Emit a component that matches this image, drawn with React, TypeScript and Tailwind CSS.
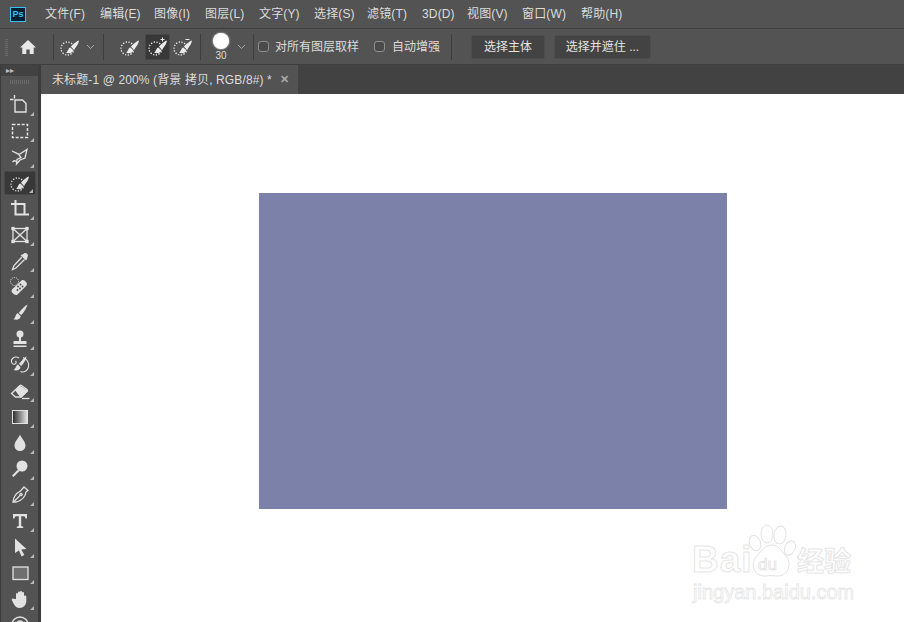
import type { ReactNode } from "react";

const cjk = "font-['Liberation_Sans','Noto_Sans_CJK_SC',sans-serif]";

const menus = [
  { label: "文件(F)", w: "w-[55px]" },
  { label: "编辑(E)", w: "w-[54px]" },
  { label: "图像(I)", w: "w-[51px]" },
  { label: "图层(L)", w: "w-[54px]" },
  { label: "文字(Y)", w: "w-[55px]" },
  { label: "选择(S)", w: "w-[53px]" },
  { label: "滤镜(T)", w: "w-[55px]" },
  { label: "3D(D)", w: "w-[45px]" },
  { label: "视图(V)", w: "w-[55px]" },
  { label: "窗口(W)", w: "w-[59px]" },
  { label: "帮助(H)", w: "w-[50px]" },
];

function Sep({ ml }: { ml: string }) {
  return <div className={`h-[26px] w-px bg-[#3d3d3d] shrink-0 ${ml}`} />;
}

function Chevron({ ml }: { ml: string }) {
  return (
    <svg width="9" height="6" viewBox="0 0 9 6" className={`shrink-0 ${ml}`} fill="none" stroke="#a8a8a8" strokeWidth="1">
      <path d="M1 1l3.500 3.500L8 1" />
    </svg>
  );
}

const s = "#e2e2e2";

function BrushShape({ color }: { color: string }) {
  return (
    <>
      <circle cx="7.500" cy="11.500" r="6.500" fill="none" stroke={color} strokeWidth="1.300" strokeDasharray="1.300 1.500" />
      <path d="M19 3.500c-2 .5-6.300 3.800-8 6.300l2.800 2.600C16.300 10.400 18.700 6 19 3.500z" fill={color} />
      <path d="M10.300 10.500c-2.200.4-1.900 3.700-4.300 5.300 3 1 6.900.4 7.300-2.600z" fill={color} />
    </>
  );
}

function QuickBrush({ mark }: { mark?: "+" | "-" }) {
  return (
    <svg width="20" height="20" viewBox="0 0 20 20" fill="none">
      <BrushShape color="#ececec" />
      {mark === "+" && <path d="M14.500 .5v4M12.500 2.500h4" stroke="#ececec" strokeWidth="1" />}
      {mark === "-" && <path d="M12.500 2.500h4" stroke="#ececec" strokeWidth="1" />}
    </svg>
  );
}

function Corner() {
  return <span className="absolute right-[2px] bottom-[1px] w-0 h-0 border-l-[4px] border-l-transparent border-b-[4px] border-b-[#b8b8b8]" />;
}

const tools: ReactNode[] = [
  <g fill="none" stroke={s} strokeWidth="1.400"><path d="M5 5h7.500l3.500 3.500V17H5z" /><path d="M0 4.500h3.500M4.500 0v3.500" /></g>,
  <rect x="2.500" y="3.500" width="15" height="13" fill="none" stroke={s} strokeWidth="1.500" strokeDasharray="3 1.600" />,
  <g fill="none" stroke={s} strokeWidth="1.300"><path d="M2 4l7 3.500L17 2.500l-2 8.500-5 2-3.500 4 .5-4.500 4-2-2.500-3.500z" /><path d="M2.500 15c2-2 3.500-1.500 4.500 1" /></g>,
  <BrushShape color={s} />,
  <g fill="none" stroke={s} strokeWidth="2"><path d="M1 5h13.500v11" /><path d="M5.500 1v14.500H19" /></g>,
  <g fill="none" stroke={s} strokeWidth="1.300"><rect x="3" y="3.500" width="14" height="13" /><path d="M3 3.500l14 13M17 3.500l-14 13" /><rect x="2" y="2.500" width="2" height="2" fill={s} /><rect x="16" y="2.500" width="2" height="2" fill={s} /><rect x="2" y="15.500" width="2" height="2" fill={s} /><rect x="16" y="15.500" width="2" height="2" fill={s} /></g>,
  <g><path d="M12 6l-8 8.500L2.500 18.500l3.500-1.500L14.500 8.500" fill="none" stroke={s} strokeWidth="1.300" /><path d="M10.500 4l5.500 5.500 1-1.500.5-2c1.500-2.500-1.500-5-3.500-3.500l-1.500 1z" fill={s} /></g>,
  <g><path d="M2 12.500L11.500 3.500c2-2 7 2.500 5 5L7.500 17.500c-2 2-7.500-2.500-5.500-5z" fill={s} /><g fill="#535353"><circle cx="8" cy="9.500" r="1" /><circle cx="10.500" cy="7.500" r="1" /><circle cx="10" cy="11.500" r="1" /><circle cx="12.500" cy="9.500" r="1" /><circle cx="7.500" cy="13" r="1" /></g><circle cx="4.500" cy="4.500" r="4" fill="none" stroke={s} strokeDasharray="1 1" /></g>,
  <g fill={s}><path d="M17.500 1.500c-1.500.6-6.500 5-8.700 8.500l2.300 2C14 9.500 17 4 17.500 1.500z" /><path d="M8 10.300c-2.800.5-1.800 4-4.500 6 3.500 1 6.800.2 7.200-3z" /></g>,
  <g fill={s}><circle cx="10" cy="5" r="3.500" /><rect x="9" y="7" width="2" height="5" /><path d="M3.500 12h13v3h-13z" /><rect x="3.500" y="16.500" width="13" height="1.500" /></g>,
  <g><g fill="none" stroke={s} strokeWidth="1.100"><path d="M9 3C4 0 0 5 2 8s5.500 0 3.500-2" /><path d="M13 2.500c4 1.500 6.500 5.500 5.500 9.500s-4.500 6-8 4.500" /></g><path d="M16.500 1.500c-1.500.6-5.500 4.500-7.500 7.500l2.200 2c2.800-2.500 5-7 5.300-9.500z" fill={s} /><path d="M8 9.500c-2.200.5-1.500 3.500-4.500 5.500 3 1 6.500.2 7-2.800z" fill={s} /></g>,
  <g fill="none" stroke={s} strokeWidth="1.300"><path d="M1.500 12.500l8.500-8c.5-.5 1-.5 1.500 0l5.500 4c.5.5.5 1 0 1.500L11 16H5.500z" /><path d="M9.500 5l7.800 5-6.300 6-5-6.500z" fill={s} /><path d="M12 17.500h7.500" /></g>,
  <>
    <defs>
      <linearGradient id="grad">
        <stop offset="0" stopColor="#2a2a2a" />
        <stop offset="1" stopColor="#e8e8e8" />
      </linearGradient>
    </defs>
    <rect x="2.500" y="3.500" width="15" height="13" fill="url(#grad)" stroke={s} />
  </>,
  <path d="M10 1.500c1 3 5.500 7 5.500 11a5.500 5.500 0 0 1-11 0C4.500 8.500 9 4.500 10 1.500z" fill={s} />,
  <g fill={s}><circle cx="12" cy="7" r="5.500" /><path d="M8 10.500L2 16.500l1.500 1.500L9.500 12z" /></g>,
  <g fill="none" stroke={s} strokeWidth="1.300"><path d="M14 2l4 3.500-2 1.500c-.5 4.500-3.500 8-9.500 10L3 17c.5-5.500 3.500-9 7.500-11z" /><path d="M3.500 17l6.500-6.500" /><circle cx="11" cy="9.500" r="1.100" /></g>,
  <path d="M3 3h14v4.500h-1.500c-.2-1.200-.5-2.200-1.700-2.200H11.200V15l2 .7V17H6.800v-1.300l2-.7V5.300H6.200C5 5.300 4.700 6.300 4.500 7.500H3z" fill={s} />,
  <path d="M5 1.500l11.500 10.500-5.200.5 3 5.500-2.800 1.500-2.500-6L5 16z" fill={s} />,
  <rect x="3" y="4" width="15" height="12.500" fill="#6f6f6f" stroke={s} strokeWidth="1.300" />,
  <path d="M6 10V5c0-1.500 2-1.500 2 0V3.500c0-1.500 2-1.500 2 0V3c0-1.500 2-1.500 2 0v1c0-1.500 2-1.500 2 0v3.500c0-1.500 2.500-1.500 2.300 0V12c0 4-3 7-6.500 7-3 0-4.500-1.500-6-4L2 11.500c-1-1.500 1-2.500 2-1.500z" fill={s} />,
  <g fill="none" stroke={s} strokeWidth="1.500"><circle cx="10" cy="10" r="8" /><circle cx="10" cy="10" r="4" /></g>,
];

function Tool({ children, active }: { children: ReactNode; active?: boolean }) {
  return (
    <div className="h-[26px] shrink-0 flex items-center justify-center">
      <div className={`relative h-[24px] w-[32px] flex items-center justify-center rounded-[2px] ${active ? "bg-[#383838] border border-[#474747]" : ""}`}>
        <svg width="20" height="20" viewBox="0 0 20 20">{children}</svg>
        <Corner />
      </div>
    </div>
  );
}

function Check({ ml }: { ml: string }) {
  return <span className={`w-[11px] h-[11px] rounded-[3px] border border-[#8e8e8e] bg-[#4a4a4a] shrink-0 ${ml}`} />;
}

export default function App() {
  return (
    <div className={`w-[904px] h-[622px] overflow-hidden bg-[#535353] flex flex-col relative ${cjk}`}>
      {/* menu bar */}
      <div className="h-[29px] shrink-0 flex items-center border-b border-[#3e3e3e] text-[12px] tracking-[0.15px] text-[#dcdcdc]">
        <div className="w-[16px] h-[15px] ml-[10px] mr-[19px] shrink-0 border border-[#31c5f0] bg-[#001e36] flex items-center justify-center text-[9px] tracking-normal font-bold leading-none text-[#31c5f0]">
          Ps
        </div>
        {menus.map((m) => (
          <div key={m.label} className={`${m.w} shrink-0 whitespace-nowrap`}>{m.label}</div>
        ))}
      </div>

      {/* options bar */}
      <div className="h-[36px] shrink-0 flex items-center border-b border-[#3e3e3e] text-[12px] text-[#dcdcdc]">
        <div className="ml-[5px] w-[3px] h-[18px] shrink-0 bg-[repeating-linear-gradient(0deg,#6a6a6a_0,#6a6a6a_1px,transparent_1px,transparent_2px)]" />
        <svg width="18" height="16" viewBox="0 0 18 16" className="ml-[11px] shrink-0" fill="#e8e8e8">
          <path d="M9 1L1 8.500h2.300V15h4v-4.500h3.400V15h4V8.500H17z" />
        </svg>
        <Sep ml="ml-[16px]" />
        <div className="ml-[6px] shrink-0 flex"><QuickBrush /></div>
        <Chevron ml="ml-[6px]" />
        <Sep ml="ml-[8px]" />
        <div className="ml-[16px] shrink-0 flex"><QuickBrush /></div>
        <div className="ml-[5px] w-[25px] h-[26px] shrink-0 flex items-center justify-center bg-[#383838] border border-[#474747] rounded-[2px]"><QuickBrush mark="+" /></div>
        <div className="ml-[3px] shrink-0 flex"><QuickBrush mark="-" /></div>
        <Sep ml="ml-[7px]" />
        <div className="ml-[11px] w-[18px] shrink-0 flex flex-col items-center">
          <div className="w-[16px] h-[16px] rounded-full bg-white shadow-[0_0_2px_#fff]" />
          <div className="text-[10px] leading-[11px] mt-[1px]">30</div>
        </div>
        <Chevron ml="ml-[7px]" />
        <Sep ml="ml-[7px]" />
        <Check ml="ml-[4px]" />
        <span className="ml-[6px] shrink-0 w-[88px] whitespace-nowrap">对所有图层取样</span>
        <Check ml="ml-[11px]" />
        <span className="ml-[7px] shrink-0 w-[48px] whitespace-nowrap">自动增强</span>
        <Sep ml="ml-[11px]" />
        <button className="ml-[19px] w-[74px] h-[24px] shrink-0 bg-[#434343] border border-[#4d4d4d] rounded-[2px] text-[12px] text-[#e4e4e4]">选择主体</button>
        <button className="ml-[9px] w-[97px] h-[24px] shrink-0 bg-[#434343] border border-[#4d4d4d] rounded-[2px] text-[12px] text-[#e4e4e4]">选择并遮住 ...</button>
      </div>

      <div className="flex-1 flex min-h-0">
        {/* tool rail */}
        <div className="w-[41px] shrink-0 border-l border-l-[#3c3c3c] border-r-[3px] border-r-[#3c3c3c] flex flex-col overflow-hidden">
          <div className="h-[11px] shrink-0 bg-[#424242] flex items-center pl-[5px]">
            <span className="text-[8px] leading-none text-[#c0c0c0]">▸▸</span>
          </div>
          <div className="mt-[4px] mb-[2px] mx-auto w-[20px] h-[4px] shrink-0 bg-[repeating-linear-gradient(90deg,#6a6a6a_0,#6a6a6a_1px,transparent_1px,transparent_2px)]" />
          <div className="mt-[6px] flex flex-col">
            {tools.map((t, i) => (
              <Tool key={i} active={i === 3}>{t}</Tool>
            ))}
          </div>
        </div>

        <div className="flex-1 flex flex-col min-w-0">
          {/* tab row */}
          <div className="h-[29px] shrink-0 bg-[#424242] flex">
            <div className="w-[257px] bg-[#535353] flex items-center pl-[11px] text-[12px] tracking-[0.12px] text-[#dcdcdc] whitespace-nowrap">
              未标题-1 @ 200% (背景 拷贝, RGB/8#) *
              <span className="ml-[8px] text-[#a8a8a8] text-[11px] font-bold">✕</span>
            </div>
          </div>
          {/* canvas */}
          <div className="flex-1 bg-white pl-[218px] pt-[99px]">
            <div className="w-[468px] h-[316px] bg-[#7c81aa]" />
          </div>
        </div>
      </div>

      {/* watermark */}
      <div className="absolute left-[692px] top-[524px] w-[170px] h-[82px] pointer-events-none">
        <div className="absolute left-0 top-[16px] text-[37px] leading-[40px] font-bold text-white [-webkit-text-stroke:1px_#e6e6e6] tracking-[1px]">Bai</div>
        <svg width="48" height="54" viewBox="0 0 48 54" className="absolute left-[56px] top-0" fill="#fff" stroke="#e2e2e2" strokeWidth="1">
          <ellipse cx="7" cy="19" rx="5.500" ry="8" transform="rotate(-20 7 19)" />
          <ellipse cx="19" cy="10" rx="6" ry="9" />
          <ellipse cx="32" cy="11" rx="6" ry="9" transform="rotate(10 32 11)" />
          <ellipse cx="42" cy="24" rx="5" ry="7.500" transform="rotate(25 42 24)" />
          <path d="M24 21c7 0 9 6 14 11 6 7 3 19-7 20-5 0-9-1-13 0-10 1-17-9-10-19 5-5 8-12 16-12z" />
        </svg>
        <div className="absolute left-[66px] top-[31px] text-[17px] leading-[20px] text-white [-webkit-text-stroke:0.7px_#dedede]">du</div>
        <div className="absolute left-[105px] top-[22px] text-[27px] leading-[32px] font-bold text-white [-webkit-text-stroke:1px_#e6e6e6] whitespace-nowrap">经验</div>
        <div className="absolute left-[1px] top-[56px] text-[20px] leading-[24px] text-white [-webkit-text-stroke:0.8px_#e6e6e6] whitespace-nowrap">jingyan.baidu.com</div>
      </div>
    </div>
  );
}
